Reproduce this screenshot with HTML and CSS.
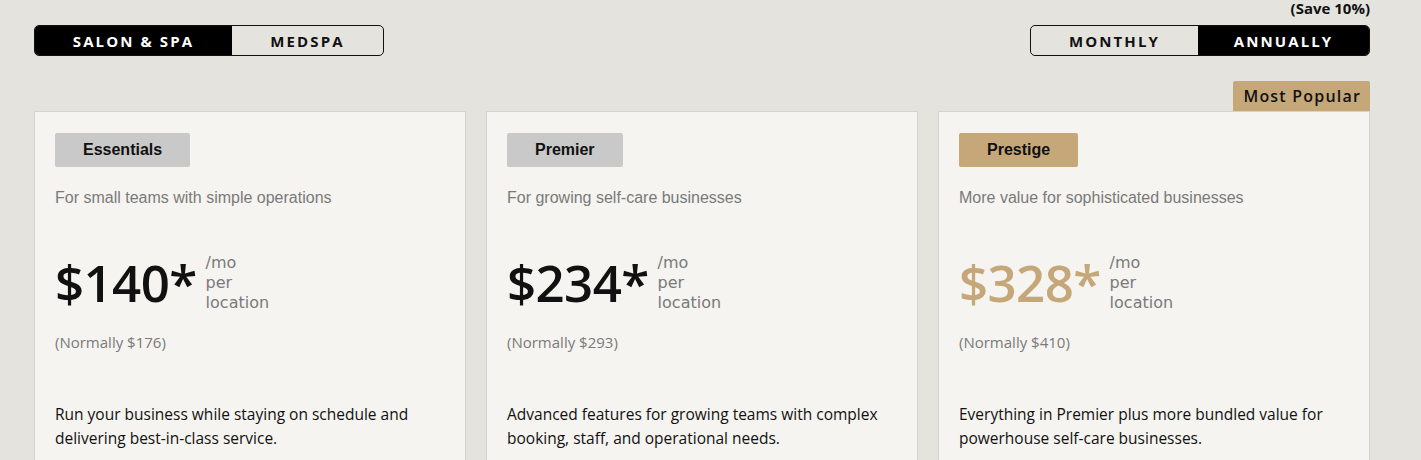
FILE: index.html
```html
<!DOCTYPE html>
<html lang="en">
<head>
    <meta charset="UTF-8">
    <meta name="viewport" content="width=device-width, initial-scale=1.0">
    <title>Pricing</title>
    <link rel="stylesheet" href="styles.css">
</head>
<body>
    <div class="page">
        <div class="controls">
            <div class="toggle">
                <button class="toggle-option active">SALON &amp; SPA</button>
                <button class="toggle-option">MEDSPA</button>
            </div>
            <div class="billing">
                <span class="save-note">(Save 10%)</span>
                <div class="toggle toggle-billing">
                    <button class="toggle-option">MONTHLY</button>
                    <button class="toggle-option active">ANNUALLY</button>
                </div>
            </div>
        </div>

        <div class="badge-row">
            <span class="badge">Most Popular</span>
        </div>

        <div class="plans">
            <div class="plan">
                <span class="plan-tag">Essentials</span>
                <p class="plan-summary">For small teams with simple operations</p>
                <div class="price-row">
                    <span class="price">$140*</span>
                    <span class="price-unit">/mo<br>per<br>location</span>
                </div>
                <p class="normal-price">(Normally $176)</p>
                <p class="plan-desc">Run your business while staying on schedule and delivering best-in-class service.</p>
            </div>

            <div class="plan">
                <span class="plan-tag">Premier</span>
                <p class="plan-summary">For growing self-care businesses</p>
                <div class="price-row">
                    <span class="price">$234*</span>
                    <span class="price-unit">/mo<br>per<br>location</span>
                </div>
                <p class="normal-price">(Normally $293)</p>
                <p class="plan-desc">Advanced features for growing teams with complex booking, staff, and operational needs.</p>
            </div>

            <div class="plan">
                <span class="plan-tag plan-tag-gold">Prestige</span>
                <p class="plan-summary">More value for sophisticated businesses</p>
                <div class="price-row">
                    <span class="price price-gold">$328*</span>
                    <span class="price-unit">/mo<br>per<br>location</span>
                </div>
                <p class="normal-price">(Normally $410)</p>
                <p class="plan-desc">Everything in Premier plus more bundled value for powerhouse self-care businesses.</p>
            </div>
        </div>
    </div>
</body>
</html>
```

FILE: styles.css
```css
:root {
    --page-bg: #e4e3de;
    --card-bg: #f5f4f0;
    --card-border: #d3d2ce;
    --gold: #c6a77a;
    --tag-grey: #c9c9c9;
    --text-dark: #111111;
    --text-muted: #7a7a7a;
}

body {
    margin: 0;
    background-color: var(--page-bg);
    font-family: 'Open Sans', sans-serif;
    color: var(--text-dark);
    overflow: hidden;
}

.page {
    width: 1336px;
    padding-left: 34px;
}

.controls {
    display: flex;
    justify-content: space-between;
    align-items: flex-end;
    height: 56px;
}

.toggle {
    display: flex;
    width: 350px;
    height: 31px;
    border: 1px solid #111;
    border-radius: 5px;
    overflow: hidden;
    box-sizing: border-box;
}

.toggle-option {
    flex: 1;
    border: none;
    background: transparent;
    font-family: 'Open Sans', sans-serif;
    font-weight: 700;
    font-size: 15px;
    letter-spacing: 2.1px;
    color: var(--text-dark);
    padding: 0;
}

.toggle-option:first-child {
    flex: 0 0 197px;
}

.toggle-option.active {
    background-color: #000;
    color: #fff;
}

.billing {
    display: flex;
    flex-direction: column;
    align-items: flex-end;
}

.save-note {
    font-size: 15px;
    font-weight: 700;
    line-height: 16px;
    margin-bottom: 9px;
}

.toggle-billing {
    width: 340px;
}

.toggle-billing .toggle-option:first-child {
    flex: 0 0 167px;
}

.badge-row {
    display: flex;
    justify-content: flex-end;
    padding-top: 25px;
}

.badge {
    background-color: var(--gold);
    font-size: 16px;
    font-weight: 600;
    letter-spacing: 1.2px;
    line-height: 30px;
    padding: 0 9px 0 10px;
    border-radius: 2px 2px 0 0;
}

.plans {
    display: grid;
    grid-template-columns: repeat(3, 1fr);
    gap: 20px;
}

.plan {
    background-color: var(--card-bg);
    border: 1px solid var(--card-border);
    padding: 21px 20px 40px;
    height: 400px;
}

.plan-tag {
    display: inline-block;
    background-color: var(--tag-grey);
    font-family: 'Liberation Sans', Arial, sans-serif;
    font-weight: 700;
    font-size: 16px;
    line-height: 34px;
    padding: 0 28px;
    border-radius: 2px;
}

.plan-tag-gold {
    background-color: var(--gold);
}

.plan-summary {
    font-family: 'Liberation Sans', Arial, sans-serif;
    font-size: 16px;
    color: var(--text-muted);
    margin: 21px 0 0;
    line-height: 20px;
}

.price-row {
    display: flex;
    align-items: flex-start;
    margin-top: 44px;
}

.price {
    font-size: 51px;
    line-height: 60px;
    font-weight: 600;
    letter-spacing: -0.6px;
}

.price-gold {
    color: var(--gold);
}

.price-unit {
    font-family: 'DejaVu Sans', sans-serif;
    font-size: 16px;
    line-height: 20px;
    color: var(--text-muted);
    margin-left: 9px;
    padding-top: 1px;
}

.normal-price {
    font-size: 15px;
    color: var(--text-muted);
    margin: 19px 0 0;
    line-height: 20px;
}

.plan-desc {
    font-size: 15.5px;
    line-height: 24px;
    margin: 50px 0 0;
    max-width: 390px;
}
```
